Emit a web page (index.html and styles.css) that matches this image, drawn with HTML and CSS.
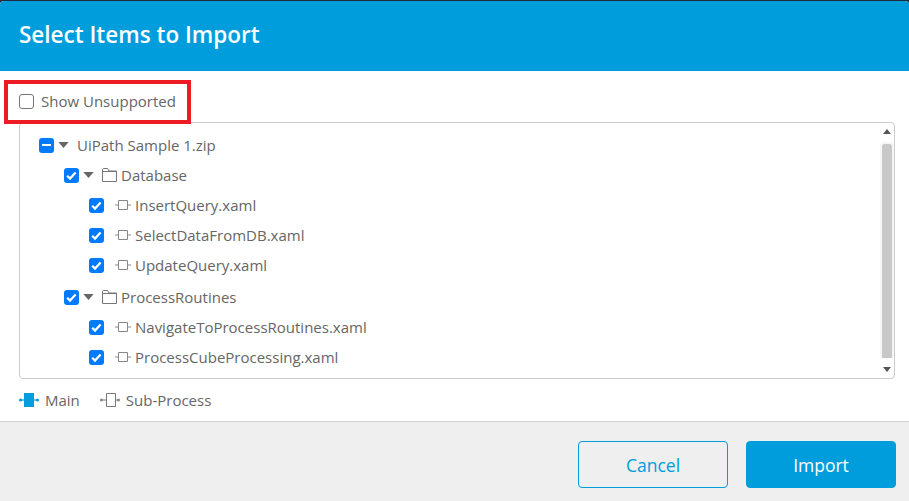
FILE: index.html
```html
<!DOCTYPE html>
<html lang="en">
<head>
<meta charset="utf-8">
<title>Select Items to Import</title>
<link rel="stylesheet" href="styles.css">
</head>
<body>
<svg class="defs" width="0" height="0" aria-hidden="true">
  <symbol id="check" viewBox="0 0 16 16"><path d="M3.4 8.3l3 3 6-6.4" fill="none" stroke="#fff" stroke-width="2.4"/></symbol>
  <symbol id="caret" viewBox="0 0 12 7"><path d="M0 0h12L6 7z" fill="#666"/></symbol>
  <symbol id="folder" viewBox="0 0 15 14"><path d="M.5 13.500V1.500a1 1 0 0 1 1-1h4l1.500 2.500h7.500v10.500zM.5 3.500h14" fill="none" stroke="#777" stroke-width="1"/></symbol>
  <symbol id="sub" viewBox="0 0 16 14"><path d="M3.500 2.500h9v9h-9zM0 7h3.500M12.500 7H16" fill="none" stroke="#888" stroke-width="1"/></symbol>
  <symbol id="sub-lg" viewBox="0 0 20 14"><path d="M6.500.500h9v13h-9zM2 7h4.500M15.500 7H18" fill="none" stroke="#777" stroke-width="1"/><circle cx="1.500" cy="7" r="1.500" fill="#888"/><circle cx="18.500" cy="7" r="1.500" fill="#888"/></symbol>
  <symbol id="main" viewBox="0 0 20 14"><path d="M5 0h10v14H5z" fill="#009ddc"/><path d="M1 7h18" stroke="#009ddc" stroke-width="1.200"/><circle cx="1.500" cy="7" r="1.500" fill="#009ddc"/><circle cx="18.500" cy="7" r="1.500" fill="#009ddc"/></symbol>
</svg>
<div class="modal">
  <header class="head"><h1 class="title">Select Items to Import</h1></header>
  <main class="body">
    <label class="show"><span class="box"></span><span>Show Unsupported</span></label>
    <div class="highlight"></div>
    <div class="tree">
      <div class="list">
        <div class="row"><span class="cb on"><i class="dash"></i></span><svg class="caret"><use href="#caret"/></svg><span class="zip">UiPath Sample 1.zip</span></div>
        <div class="row l1"><span class="cb on"><svg class="tick"><use href="#check"/></svg></span><svg class="caret"><use href="#caret"/></svg><svg class="folder"><use href="#folder"/></svg><span>Database</span></div>
        <div class="row l2"><span class="cb on"><svg class="tick"><use href="#check"/></svg></span><svg class="sub"><use href="#sub"/></svg><span>InsertQuery.xaml</span></div>
        <div class="row l2"><span class="cb on"><svg class="tick"><use href="#check"/></svg></span><svg class="sub"><use href="#sub"/></svg><span>SelectDataFromDB.xaml</span></div>
        <div class="row l2"><span class="cb on"><svg class="tick"><use href="#check"/></svg></span><svg class="sub"><use href="#sub"/></svg><span>UpdateQuery.xaml</span></div>
        <div class="row l1 gap"><span class="cb on"><svg class="tick"><use href="#check"/></svg></span><svg class="caret"><use href="#caret"/></svg><svg class="folder"><use href="#folder"/></svg><span>ProcessRoutines</span></div>
        <div class="row l2"><span class="cb on"><svg class="tick"><use href="#check"/></svg></span><svg class="sub"><use href="#sub"/></svg><span>NavigateToProcessRoutines.xaml</span></div>
        <div class="row l2"><span class="cb on"><svg class="tick"><use href="#check"/></svg></span><svg class="sub"><use href="#sub"/></svg><span>ProcessCubeProcessing.xaml</span></div>
      </div>
      <div class="scroll">
        <span class="arrow up"></span>
        <span class="track"><span class="thumb"></span></span>
        <span class="arrow down"></span>
      </div>
    </div>
    <div class="legend">
      <span class="key"><svg class="leg-ic"><use href="#main"/></svg>Main</span>
      <span class="key"><svg class="leg-ic"><use href="#sub-lg"/></svg>Sub-Process</span>
    </div>
  </main>
  <footer class="foot">
    <button class="btn ghost">Cancel</button>
    <button class="btn solid">Import</button>
  </footer>
</div>
</body>
</html>
```

FILE: styles.css
```css
* { box-sizing: border-box; }
html, body { margin: 0; height: 100%; }
body {
  background: #1f2a3a;
  font-family: "Open Sans", "Liberation Sans", sans-serif;
  color: #666;
  overflow: hidden;
}
.defs { position: absolute; }
.modal {
  margin-top: 1px;
  height: 500px;
  display: flex;
  flex-direction: column;
  background: #fff;
  border-radius: 4px 4px 0 0;
  overflow: hidden;
}
.head {
  height: 70px;
  flex: none;
  background: #009ddc;
  display: flex;
  align-items: center;
  padding: 0 19px 3px;
}
.title { margin: 0; font-size: 22.5px; font-weight: 600; color: #fff; }
.body { position: relative; flex: 1; min-height: 0; padding: 0 14px 0 19px; }
.show { display: flex; align-items: center; gap: 7px; height: 51px; padding-top: 9px; font-size: 15px; }
.box { width: 15px; height: 15px; border: 1px solid #757575; border-radius: 3px; background: #fff; }
.highlight {
  position: absolute;
  left: 4px;
  top: 9px;
  width: 187px;
  height: 44px;
  border: 4px solid #ed1c24;
  pointer-events: none;
}
.tree {
  height: 257px;
  border: 1px solid #ccc;
  border-radius: 4px;
  display: flex;
  justify-content: space-between;
}
.list { padding: 7px 0 0 19px; font-size: 15px; }
.row { display: flex; align-items: center; height: 30px; }
.l1 { padding-left: 25px; }
.l2 { padding-left: 50px; }
.gap { margin-top: 2px; }
.cb {
  width: 15px;
  height: 15px;
  flex: none;
  border-radius: 3px;
  background: #007bff;
  display: flex;
  align-items: center;
  justify-content: center;
}
.dash { width: 9px; height: 2px; background: #fff; }
.tick { width: 15px; height: 15px; }
.caret { width: 11px; height: 6px; margin-left: 4px; flex: none; }
.zip { margin-left: 8px; }
.folder { width: 15px; height: 14px; margin-left: 8px; margin-right: 4px; flex: none; }
.sub { width: 16px; height: 14px; margin-left: 11px; margin-right: 4px; flex: none; }
.scroll { width: 15px; display: flex; flex-direction: column; align-items: center; padding: 6px 0; }
.arrow { width: 0; height: 0; border-left: 4px solid transparent; border-right: 4px solid transparent; flex: none; }
.up { border-bottom: 5px solid #555; }
.down { border-top: 5px solid #555; }
.track { flex: 1; width: 14px; margin: 8px 0 9px; background: #f6f6f6; border-radius: 4px 4px 0 0; padding: 2px 2px 0; display: flex; }
.thumb { flex: 1; background: #c8c8c8; border-radius: 3px 3px 0 0; }
.legend { display: flex; gap: 20px; height: 42px; align-items: center; font-size: 15px; }
.key { display: flex; align-items: center; gap: 6px; }
.leg-ic { width: 20px; height: 14px; }
.foot {
  flex: none;
  height: 80px;
  background: #efefef;
  border-top: 1px solid #d0d0d0;
  display: flex;
  justify-content: flex-end;
  gap: 18px;
  padding: 19px 13px 0 0;
}
.btn {
  width: 150px;
  height: 47px;
  border-radius: 4px;
  font: 17.500px "Open Sans", "Liberation Sans", sans-serif;
}
.ghost { background: transparent; border: 1px solid #009ddc; color: #009ddc; }
.solid { background: #009ddc; border: 1px solid #009ddc; color: #fff; }
```
